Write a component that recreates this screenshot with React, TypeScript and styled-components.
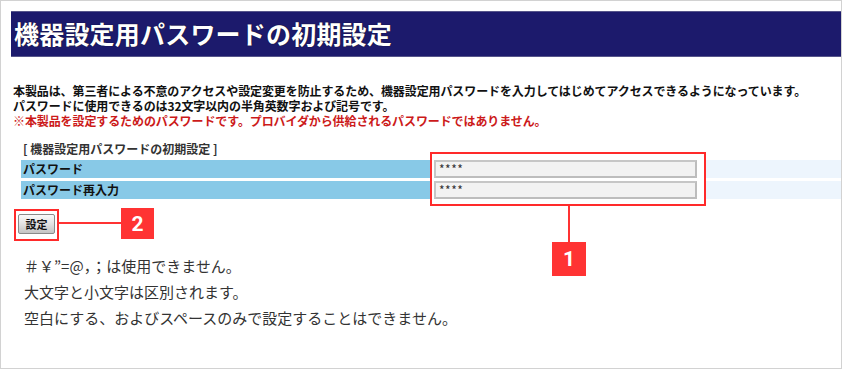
import React from "react";
import styled, { createGlobalStyle } from "styled-components";

const Global = createGlobalStyle`
  html, body { margin: 0; padding: 0; background: #fff; }
  body { font-family: "Noto Sans CJK JP", "Noto Sans", sans-serif; }
  * { box-sizing: border-box; }
`;

const Frame = styled.div`
  position: relative;
  width: 842px;
  height: 369px;
  border: 1px solid #d2d2d2;
  padding: 10px 0 0 10px;
  overflow: hidden;
  display: flex;
  flex-direction: column;
`;

const Header = styled.h1`
  margin: 0;
  height: 46px;
  flex: none;
  background: #1c1a6c;
  border-top: 1px solid #56558a;
  border-bottom: 1px solid #56558a;
  color: #fff;
  font-size: 25px;
  font-weight: 700;
  line-height: 43px;
  padding-left: 3px;
  letter-spacing: 0.2px;
  text-shadow: 0 0 1px #000;
`;

const Content = styled.div`
  display: flex;
  flex-direction: column;
  align-items: flex-start;
  padding: 26px 0 0 2px;
`;

const Intro = styled.div`
  display: flex;
  flex-direction: column;
  font-size: 12px;
  line-height: 15px;
  font-weight: 700;
  letter-spacing: -0.1px;
`;

const Line = styled.span<{ $warn?: boolean }>`
  color: ${(p) => (p.$warn ? "#cc1a1a" : "#111")};
`;

const SectionTitle = styled.div`
  margin: 13px 0 0 10px;
  font-size: 12px;
  line-height: 16px;
  font-weight: 700;
  color: #333;
`;

const Table = styled.div`
  align-self: stretch;
  margin: 3px 0 0 8px;
  display: grid;
  grid-template-columns: 409px 1fr;
  row-gap: 3px;
`;

const LabelCell = styled.div`
  height: 18px;
  background: #88c9e7;
  font-size: 12px;
  font-weight: 700;
  line-height: 18px;
  color: #111;
  padding-left: 2px;
`;

const ValueCell = styled.div`
  height: 18px;
  background: linear-gradient(to right, #fff 0 275px, #edf5fd 275px);
  padding-left: 4px;
`;

const Input = styled.div`
  width: 263px;
  height: 18px;
  background: #f2f2f2;
  border: 2px solid #c6c6c6;
  border-right-color: #bdbdbd;
  border-bottom-color: #bdbdbd;
  font-size: 12px;
  line-height: 14px;
  padding-left: 3px;
  color: #333;
  letter-spacing: 0.5px;
`;

const Button = styled.button`
  margin: 15px 0 0 5px;
  width: 37px;
  height: 20px;
  padding: 0;
  font-family: inherit;
  font-size: 11px;
  font-weight: 700;
  color: #111;
  background: linear-gradient(#fafafa, #e2e2e2 50%, #c4c4c4);
  border: 1px solid #8a8a8a;
  border-radius: 2px;
  line-height: 18px;
`;

const Notes = styled.div`
  display: flex;
  flex-direction: column;
  margin: 19px 0 0 11px;
  font-size: 15px;
  line-height: 26px;
  color: #333;
`;

const Callout = styled.div<{ $l: number; $t: number; $w: number; $h: number }>`
  position: absolute;
  left: ${(p) => p.$l}px;
  top: ${(p) => p.$t}px;
  width: ${(p) => p.$w}px;
  height: ${(p) => p.$h}px;
  border: 2px solid #ff2a2a;
`;

const Connector = styled.div<{ $l: number; $t: number; $w: number; $h: number }>`
  position: absolute;
  left: ${(p) => p.$l}px;
  top: ${(p) => p.$t}px;
  width: ${(p) => p.$w}px;
  height: ${(p) => p.$h}px;
  background: #ff3333;
`;

const Badge = styled.div<{ $l: number; $t: number; $w: number; $h: number }>`
  position: absolute;
  left: ${(p) => p.$l}px;
  top: ${(p) => p.$t}px;
  width: ${(p) => p.$w}px;
  height: ${(p) => p.$h}px;
  background: #ff3333;
  color: #fff;
  font-family: "Roboto", "Liberation Sans", sans-serif;
  font-weight: 700;
  font-size: 21px;
  display: flex;
  align-items: center;
  justify-content: center;
`;

export default function App() {
  return (
    <>
      <Global />
      <Frame>
        <Header>機器設定用パスワードの初期設定</Header>
        <Content>
          <Intro>
            <Line>
              本製品は、第三者による不意のアクセスや設定変更を防止するため、機器設定用パスワードを入力してはじめてアクセスできるようになっています。
            </Line>
            <Line>パスワードに使用できるのは32文字以内の半角英数字および記号です。</Line>
            <Line $warn>
              ※本製品を設定するためのパスワードです。プロバイダから供給されるパスワードではありません。
            </Line>
          </Intro>
          <SectionTitle>[ 機器設定用パスワードの初期設定 ]</SectionTitle>
          <Table>
            <LabelCell>パスワード</LabelCell>
            <ValueCell>
              <Input>****</Input>
            </ValueCell>
            <LabelCell>パスワード再入力</LabelCell>
            <ValueCell>
              <Input>****</Input>
            </ValueCell>
          </Table>
          <Button>設定</Button>
          <Notes>
            <span>＃￥”=@，；は使用できません。</span>
            <span>大文字と小文字は区別されます。</span>
            <span>空白にする、およびスペースのみで設定することはできません。</span>
          </Notes>
        </Content>

        <Callout $l={429} $t={151} $w={276} $h={54} />
        <Connector $l={567} $t={205} $w={2} $h={36} />
        <Badge $l={551} $t={241} $w={34} $h={34}>1</Badge>

        <Callout $l={13} $t={208} $w={45} $h={32} />
        <Connector $l={58} $t={221} $w={62} $h={2} />
        <Badge $l={120} $t={207} $w={33} $h={31}>2</Badge>
      </Frame>
    </>
  );
}
